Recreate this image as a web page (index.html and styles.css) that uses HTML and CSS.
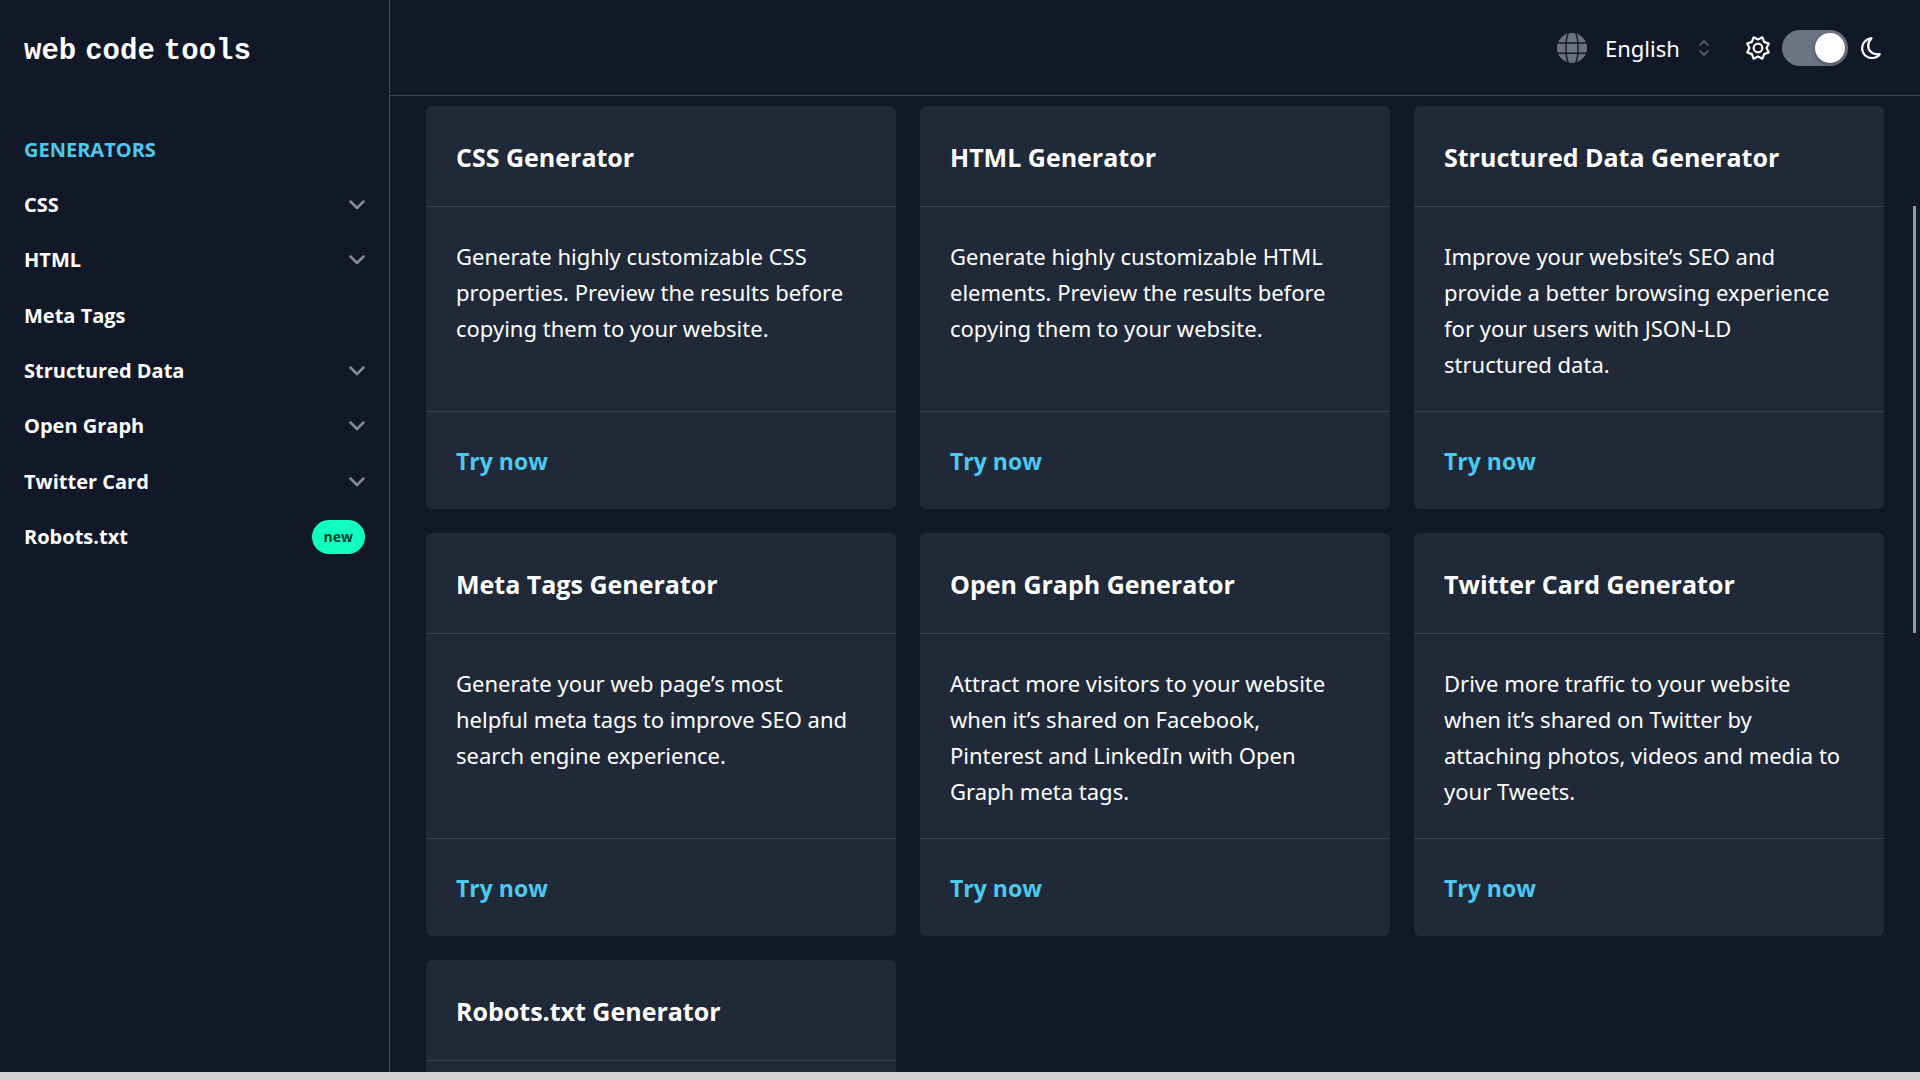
FILE: index.html
```html
<!DOCTYPE html>
<html lang="en">
<head>
<meta charset="utf-8">
<meta name="viewport" content="width=device-width, initial-scale=1">
<title>Web Code Tools</title>
<link rel="stylesheet" href="styles.css">
</head>
<body>
<svg class="sprite" aria-hidden="true">
  <symbol id="chevron" viewBox="0 0 16 10"><path d="M1.5 1.5 8 8l6.5-6.5" fill="none" stroke="currentColor" stroke-width="2.5" stroke-linecap="round" stroke-linejoin="round"/></symbol>
</svg>
<div class="app">
  <aside class="sidebar">
    <a class="logo" href="#"><span>web</span> <span>code</span> <span>tools</span></a>
    <nav class="nav" aria-label="Generators">
      <h2 class="nav-title">GENERATORS</h2>
      <ul class="nav-list">
        <li><button class="nav-item" type="button">CSS<svg class="chevron"><use href="#chevron"/></svg></button></li>
        <li><button class="nav-item" type="button">HTML<svg class="chevron"><use href="#chevron"/></svg></button></li>
        <li><a class="nav-item" href="#">Meta Tags</a></li>
        <li><button class="nav-item" type="button">Structured Data<svg class="chevron"><use href="#chevron"/></svg></button></li>
        <li><button class="nav-item" type="button">Open Graph<svg class="chevron"><use href="#chevron"/></svg></button></li>
        <li><button class="nav-item" type="button">Twitter Card<svg class="chevron"><use href="#chevron"/></svg></button></li>
        <li><a class="nav-item" href="#">Robots.txt<span class="badge">new</span></a></li>
      </ul>
    </nav>
  </aside>
  <div class="page">
    <header class="topbar">
      <label class="language">
        <svg class="globe" viewBox="0 0 30 30" aria-hidden="true">
          <defs><clipPath id="disc"><circle cx="15" cy="15" r="15"/></clipPath></defs>
          <circle cx="15" cy="15" r="15" fill="#6b7280"/>
          <g fill="none" stroke="#111827" stroke-width="1.4" clip-path="url(#disc)">
            <path d="M0 10h30M0 20.300h30"/>
            <path d="M12 -1C8 5 8 25 12 31M18 -1c4 6 4 26 0 32"/>
          </g>
        </svg>
        <select class="language-select" aria-label="Language"><option>English</option></select>
        <svg class="updown" viewBox="0 0 12 18" aria-hidden="true"><path d="M2 6l4-4 4 4M2 12l4 4 4-4" fill="none" stroke="#4b5563" stroke-width="2" stroke-linecap="round" stroke-linejoin="round"/></svg>
      </label>
      <label class="theme">
        <svg class="theme-icon" viewBox="0 0 24 24" aria-hidden="true"><g fill="none" stroke="#fff" stroke-width="2.2" stroke-linejoin="round"><path d="M22.700 16.400 18.100 18.100 16.400 22.700 12 20.600 7.600 22.700 5.900 18.100 1.300 16.400 3.400 12 1.300 7.600 5.900 5.900 7.600 1.300 12 3.400 16.400 1.300 18.100 5.900 22.700 7.600 20.600 12Z"/><circle cx="12" cy="12" r="4.300"/></g></svg>
        <input class="switch" type="checkbox" role="switch" aria-label="Dark mode" checked>
        <svg class="theme-icon" viewBox="0 0 24 24" aria-hidden="true"><path d="M11.500 2.200C6 3 2.100 7 2.100 12.300 2.100 17.700 6.500 22 12 22c3.600 0 6.200-1.500 7.800-3.900C13.500 19 8.200 15.500 8.200 10.200 8.200 7 9.500 4.200 11.500 2.200Z" fill="none" stroke="#fff" stroke-width="2.2" stroke-linejoin="round"/></svg>
      </label>
    </header>
    <main class="cards">
      <article class="card"><h3 class="card-title">CSS Generator</h3><p class="card-text">Generate highly customizable CSS properties. Preview the results before copying them to your website.</p><div class="card-foot"><a class="try" href="#">Try now</a></div></article>
      <article class="card"><h3 class="card-title">HTML Generator</h3><p class="card-text">Generate highly customizable HTML elements. Preview the results before copying them to your website.</p><div class="card-foot"><a class="try" href="#">Try now</a></div></article>
      <article class="card"><h3 class="card-title">Structured Data Generator</h3><p class="card-text">Improve your website’s SEO and provide a better browsing experience for your users with JSON-LD<br>structured data.</p><div class="card-foot"><a class="try" href="#">Try now</a></div></article>
      <article class="card"><h3 class="card-title">Meta Tags Generator</h3><p class="card-text">Generate your web page’s most<br>helpful meta tags to improve SEO and search engine experience.</p><div class="card-foot"><a class="try" href="#">Try now</a></div></article>
      <article class="card"><h3 class="card-title">Open Graph Generator</h3><p class="card-text">Attract more visitors to your website when it’s shared on Facebook,<br>Pinterest and LinkedIn with Open Graph meta tags.</p><div class="card-foot"><a class="try" href="#">Try now</a></div></article>
      <article class="card"><h3 class="card-title">Twitter Card Generator</h3><p class="card-text">Drive more traffic to your website<br>when it’s shared on Twitter by attaching photos, videos and media to your Tweets.</p><div class="card-foot"><a class="try" href="#">Try now</a></div></article>
      <article class="card"><h3 class="card-title">Robots.txt Generator</h3><p class="card-text"></p></article>
    </main>
  </div>
</div>
<div class="scroll-thumb"></div>
<div class="bottom-strip"></div>
</body>
</html>
```
FILE: styles.css
```css
*, *::before { box-sizing: border-box; }
html { height: 100%; }
body {
  height: 100%;
  margin: 0;
  overflow: hidden;
  background: #111827;
  color: #fff;
  font: 400 22px/36px "Noto Sans", "Open Sans", sans-serif;
}
h2, h3, p, ul { margin: 0; padding: 0; }
ul { list-style: none; }
a { color: inherit; text-decoration: none; }
button, select { font: inherit; color: inherit; background: none; border: 0; padding: 0; }
.sprite { display: none; }

.app { display: grid; grid-template-columns: 390px 1fr; height: 100vh; }

/* Sidebar */
.sidebar {
  padding: 0 24px;
  border-right: 1px solid #414858;
  font-family: "Open Sans", sans-serif;
}
.logo {
  display: flex;
  align-items: center;
  gap: 9px;
  height: 96px;
  padding-top: 8px;
  font: 700 29px/36px "Liberation Mono", monospace;
}
.nav-title {
  margin-top: 36px;
  color: #4cc9f0;
  font-size: 20px;
  font-weight: 700;
  line-height: 36px;
}
.nav-list { display: grid; grid-auto-rows: 1fr; min-height: 388px; margin-top: 9px; }
.nav-list li { display: flex; }
.nav-item {
  display: flex;
  flex: 1;
  align-items: center;
  justify-content: space-between;
  font-size: 20px;
  font-weight: 700;
}
.chevron { width: 16px; height: 10px; color: #868a92; }
.badge {
  padding: 0 12px;
  border-radius: 17px;
  background: #0fffc1;
  color: #043d2e;
  font-size: 14px;
  line-height: 34px;
}

/* Top bar */
.page { display: flex; flex-direction: column; min-width: 0; overflow: hidden; }
.topbar {
  display: flex;
  flex: none;
  align-items: center;
  justify-content: flex-end;
  gap: 36px;
  height: 96px;
  padding-right: 36px;
  border-bottom: 1px solid #414858;
}
.language { display: flex; align-items: center; gap: 18px; }
.globe { width: 30px; height: 30px; }
.language-select { appearance: none; outline: 0; }
.updown { width: 12px; height: 18px; }
.theme { display: flex; align-items: center; gap: 12px; }
.theme-icon { width: 24px; height: 24px; }
.switch {
  appearance: none;
  width: 66px;
  height: 36px;
  margin: 0;
  padding: 3px;
  border-radius: 18px;
  background: #6b7280;
}
.switch::before {
  content: "";
  display: block;
  width: 30px;
  height: 30px;
  border-radius: 50%;
  background: #fff;
  box-shadow: 0 2px 4px rgba(0, 0, 0, .25);
}
.switch:checked::before { margin-left: auto; }

/* Cards */
.cards {
  display: grid;
  grid-template-columns: repeat(3, 1fr);
  gap: 24px;
  padding: 10px 36px 36px;
}
.card { display: flex; flex-direction: column; border-radius: 6px; background: #1f2937; }
.card-title {
  padding: 33px 30px 31px;
  border-bottom: 1px solid #374151;
  font: 700 25px/36px "Open Sans", sans-serif;
}
.card-text { flex: 1; min-height: 204px; padding: 31px 30px 29px; }
.card-foot { padding: 31px 30px 30px; border-top: 1px solid #374151; }
.try { display: block; color: #4cc9f0; font: 700 23px/36px "Open Sans", sans-serif; }

/* Overlays at the window edges */
.scroll-thumb {
  position: fixed;
  top: 206px;
  right: 4px;
  width: 3px;
  height: 427px;
  background: #999;
}
.bottom-strip {
  position: fixed;
  inset: auto 0 0;
  height: 8px;
  background: rgba(231, 231, 231, .9);
}
```
